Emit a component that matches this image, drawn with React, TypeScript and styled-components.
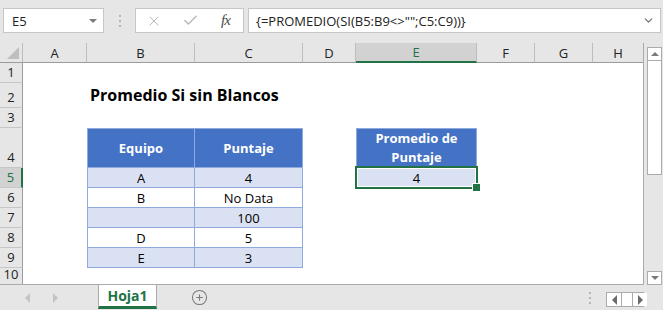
import styled, { createGlobalStyle, css } from 'styled-components';
import { X, Check, ChevronDown, CirclePlus } from 'lucide-react';

const GlobalStyle = createGlobalStyle`
  * {
    margin: 0;
    padding: 0;
    box-sizing: border-box;
  }
  body {
    background: #e6e6e6;
    font-family: 'Open Sans', 'Noto Sans', sans-serif;
  }
`;

const GREEN = '#217346';
const BLUE = '#4472c4';
const BAND = '#d9e1f2';
const LINE = '#8ea9db';

const Window = styled.div`
  width: 663px;
  height: 310px;
  display: flex;
  flex-direction: column;
  background: #e6e6e6;
  overflow: hidden;
`;

const FormulaBar = styled.div`
  height: 43px;
  display: flex;
  align-items: flex-start;
  padding: 8px 2px 0 3px;
`;

const Box = styled.div<{ $w?: number }>`
  height: 25px;
  background: #fff;
  border: 1px solid #c6c6c6;
  display: flex;
  align-items: center;
  ${(p) => (p.$w ? `width: ${p.$w}px;` : 'flex: 1;')}
`;

const NameText = styled.span`
  flex: 1;
  font-size: 13px;
  color: #222;
  padding-left: 8px;
`;

const DropTri = styled.span`
  width: 0;
  height: 0;
  border-left: 4px solid transparent;
  border-right: 4px solid transparent;
  border-top: 4px solid #7a7a7a;
  margin-right: 6px;
`;

const Grip = styled.div`
  width: 31px;
  height: 25px;
  display: flex;
  flex-direction: column;
  align-items: center;
  justify-content: center;
  gap: 3px;
  span {
    width: 2px;
    height: 2px;
    background: #b4b4b4;
  }
`;

const EditBtn = styled.span<{ $w: number }>`
  width: ${(p) => p.$w}px;
  display: flex;
  justify-content: center;
  color: #b8b8b8;
`;

const Fx = styled.span`
  font-family: 'Liberation Serif', serif;
  font-style: italic;
  font-size: 15px;
  color: #4a4a4a;
  letter-spacing: -1px;
`;

const FormulaText = styled.span`
  flex: 1;
  font-size: 13px;
  color: #222;
  padding-left: 7px;
  white-space: nowrap;
`;

const Sheet = styled.div`
  height: 242px;
  display: flex;
`;

const Grid = styled.div`
  width: 644px;
  display: grid;
  grid-template-columns: 23px 64px 108px 108px 53px 121px 58px 58px 51px;
  grid-template-rows: 20px 20px 25px 20px 40px 20px 20px 20px 20px 20px 17px;
  background: #fff;
  border-right: 1px solid #ababab;
  border-bottom: 1px solid #ababab;
  overflow: hidden;
`;

const Corner = styled.div`
  background: #e6e6e6;
  border-right: 1px solid #bdbdbd;
  border-bottom: 1px solid #9b9b9b;
  position: relative;
  &::after {
    content: '';
    position: absolute;
    right: 3px;
    bottom: 3px;
    border-left: 12px solid transparent;
    border-bottom: 12px solid #bfbfbf;
  }
`;

const ColHead = styled.div<{ $sel?: boolean }>`
  background: #e6e6e6;
  border-right: 1px solid #bdbdbd;
  border-bottom: 1px solid #9b9b9b;
  display: flex;
  align-items: center;
  justify-content: center;
  font-size: 13px;
  color: #222;
  ${(p) =>
    p.$sel &&
    css`
      background: #d2d2d2;
      color: ${GREEN};
      border-bottom: 2px solid ${GREEN};
    `}
`;

const RowHead = styled.div<{ $sel?: boolean }>`
  background: #e6e6e6;
  border-right: 1px solid #9b9b9b;
  border-bottom: 1px solid #c6c6c6;
  display: flex;
  align-items: flex-end;
  justify-content: center;
  padding-bottom: 1px;
  font-size: 13px;
  line-height: 17px;
  color: #222;
  ${(p) =>
    p.$sel &&
    css`
      background: #d2d2d2;
      color: ${GREEN};
      border-right: 2px solid ${GREEN};
    `}
`;

type Kind = 'empty' | 'title' | 'head' | 'band' | 'plain';

const Cell = styled.div<{ $kind: Kind; $left?: boolean; $top?: boolean }>`
  position: relative;
  display: flex;
  align-items: center;
  justify-content: center;
  text-align: center;
  font-size: 13px;
  color: #000;
  white-space: nowrap;
  ${(p) =>
    p.$kind === 'title' &&
    css`
      justify-content: flex-start;
      align-items: flex-end;
      padding: 0 0 2px 3px;
      font-size: 16px;
      font-weight: 700;
      overflow: visible;
      z-index: 1;
    `}
  ${(p) =>
    (p.$kind === 'head' || p.$kind === 'band' || p.$kind === 'plain') &&
    css`
      border-right: 1px solid ${LINE};
      border-bottom: 1px solid ${LINE};
      ${p.$left && `border-left: 1px solid ${LINE};`}
      ${p.$top && `border-top: 1px solid ${LINE};`}
    `}
  ${(p) =>
    p.$kind === 'head' &&
    css`
      background: ${BLUE};
      color: #fff;
      font-weight: 700;
      white-space: normal;
      line-height: 19px;
    `}
  ${(p) => p.$kind === 'band' && `background: ${BAND};`}
`;

const Selection = styled.div`
  position: absolute;
  top: -2px;
  left: -2px;
  right: -2px;
  bottom: -2px;
  border: 2px solid ${GREEN};
  box-shadow: inset 0 0 0 1px #fff;
  pointer-events: none;
  &::after {
    content: '';
    position: absolute;
    right: -5px;
    bottom: -5px;
    width: 7px;
    height: 7px;
    background: ${GREEN};
    border: 1px solid #fff;
  }
`;

const VScroll = styled.div`
  width: 19px;
  display: flex;
  flex-direction: column;
  padding: 4px 1px 0 3px;
`;

const ScrollBtn = styled.div`
  height: 14px;
  background: #fff;
  border: 1px solid #ababab;
  display: flex;
  align-items: center;
  justify-content: center;
`;

const Tri = styled.span<{ $dir: 'up' | 'down' | 'left' | 'right'; $c?: string }>`
  width: 0;
  height: 0;
  ${(p) => {
    const c = p.$c || '#7a7a7a';
    switch (p.$dir) {
      case 'up':
        return `border-left:4px solid transparent;border-right:4px solid transparent;border-bottom:4px solid ${c};`;
      case 'down':
        return `border-left:4px solid transparent;border-right:4px solid transparent;border-top:4px solid ${c};`;
      case 'left':
        return `border-top:5px solid transparent;border-bottom:5px solid transparent;border-right:5px solid ${c};`;
      default:
        return `border-top:5px solid transparent;border-bottom:5px solid transparent;border-left:5px solid ${c};`;
    }
  }}
`;

const Thumb = styled.div`
  height: 114px;
  background: #fff;
  border: 1px solid #ababab;
  border-top: none;
`;

const Spacer = styled.div`
  flex: 1;
`;

const TabBar = styled.div`
  height: 25px;
  display: flex;
  align-items: stretch;
`;

const TabNav = styled.div`
  width: 98px;
  display: flex;
  align-items: center;
  padding-left: 25px;
  gap: 23px;
`;

const SheetTab = styled.div`
  width: 59px;
  background: #fff;
  border-left: 1px solid #ababab;
  border-right: 1px solid #ababab;
  border-bottom: 3px solid ${GREEN};
  margin-bottom: 1px;
  display: flex;
  align-items: center;
  justify-content: center;
  font-size: 14px;
  font-weight: 700;
  color: ${GREEN};
`;

const AddSheet = styled.div`
  width: 84px;
  display: flex;
  align-items: center;
  justify-content: center;
  color: #7a7a7a;
`;

const VDots = styled(Grip)`
  width: 12px;
  height: 25px;
  margin-right: 10px;
`;

const HNav = styled.div`
  width: 38px;
  height: 15px;
  margin: 7px 19px 0 0;
  display: grid;
  grid-template-columns: 14px 10px 14px;
  border: 1px solid #ababab;
  background: #ababab;
  gap: 1px;
  div {
    background: #fff;
    display: flex;
    align-items: center;
    justify-content: center;
  }
`;

const cols = ['A', 'B', 'C', 'D', 'E', 'F', 'G', 'H'];

type CellDef = { kind: Kind; text?: string; left?: boolean; top?: boolean; sel?: boolean };

const rows: Record<number, Record<string, CellDef>> = {
  2: { B: { kind: 'title', text: 'Promedio Si sin Blancos' } },
  4: {
    B: { kind: 'head', text: 'Equipo', left: true, top: true },
    C: { kind: 'head', text: 'Puntaje', top: true },
    E: { kind: 'head', text: 'Promedio de Puntaje', left: true, top: true },
  },
  5: {
    B: { kind: 'band', text: 'A', left: true },
    C: { kind: 'band', text: '4' },
    E: { kind: 'band', text: '4', left: true, sel: true },
  },
  6: { B: { kind: 'plain', text: 'B', left: true }, C: { kind: 'plain', text: 'No Data' } },
  7: { B: { kind: 'band', text: '', left: true }, C: { kind: 'band', text: '100' } },
  8: { B: { kind: 'plain', text: 'D', left: true }, C: { kind: 'plain', text: '5' } },
  9: { B: { kind: 'band', text: 'E', left: true }, C: { kind: 'band', text: '3' } },
};

const App: React.FC = () => {
  return (
    <>
      <GlobalStyle />
      <Window>
        <FormulaBar>
          <Box $w={101}>
            <NameText>E5</NameText>
            <DropTri />
          </Box>
          <Grip>
            <span />
            <span />
            <span />
          </Grip>
          <Box $w={109}>
            <EditBtn $w={36}>
              <X size={16} strokeWidth={1.5} />
            </EditBtn>
            <EditBtn $w={36}>
              <Check size={17} strokeWidth={2} />
            </EditBtn>
            <EditBtn $w={35}>
              <Fx>fx</Fx>
            </EditBtn>
          </Box>
          <Box style={{ marginLeft: 4 }}>
            <FormulaText>{'{=PROMEDIO(SI(B5:B9<>"";C5:C9))}'}</FormulaText>
            <ChevronDown size={13} color="#6a6a6a" strokeWidth={2} style={{ marginRight: 5 }} />
          </Box>
        </FormulaBar>

        <Sheet>
          <Grid>
            <Corner />
            {cols.map((c) => (
              <ColHead key={c} $sel={c === 'E'}>
                {c}
              </ColHead>
            ))}
            {Array.from({ length: 10 }, (_, i) => i + 1).map((r) => (
              <RowFragment key={r} r={r} />
            ))}
          </Grid>
          <VScroll>
            <ScrollBtn>
              <Tri $dir="up" />
            </ScrollBtn>
            <Thumb />
            <Spacer />
            <ScrollBtn>
              <Tri $dir="down" />
            </ScrollBtn>
          </VScroll>
        </Sheet>

        <TabBar>
          <TabNav>
            <Tri $dir="left" $c="#c4c4c4" />
            <Tri $dir="right" $c="#c4c4c4" />
          </TabNav>
          <SheetTab>Hoja1</SheetTab>
          <AddSheet>
            <CirclePlus size={17} strokeWidth={1.5} />
          </AddSheet>
          <Spacer />
          <VDots>
            <span />
            <span />
            <span />
          </VDots>
          <HNav>
            <div>
              <Tri $dir="left" $c="#6a6a6a" />
            </div>
            <div />
            <div>
              <Tri $dir="right" $c="#6a6a6a" />
            </div>
          </HNav>
        </TabBar>
      </Window>
    </>
  );
};

const RowFragment: React.FC<{ r: number }> = ({ r }) => {
  const defs = rows[r] || {};
  return (
    <>
      <RowHead $sel={r === 5}>{r}</RowHead>
      {cols.map((c) => {
        const d = defs[c];
        if (!d) return <Cell key={c} $kind="empty" />;
        return (
          <Cell key={c} $kind={d.kind} $left={d.left} $top={d.top}>
            {d.text}
            {d.sel && <Selection />}
          </Cell>
        );
      })}
    </>
  );
};

export default App;
